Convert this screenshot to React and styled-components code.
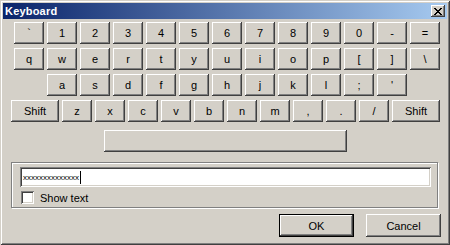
import React, { useState } from 'react'
import styled, { createGlobalStyle } from 'styled-components'

const face = '#d4d0c8'

const Global = createGlobalStyle`
  html, body {
    margin: 0;
    padding: 0;
    background: ${face};
  }
  body {
    font-family: "Liberation Sans", Arial, sans-serif;
    font-size: 11px;
    color: #000;
  }
`

const rows = [
  { indent: 3, keys: ['`', '1', '2', '3', '4', '5', '6', '7', '8', '9', '0', '-', '='] },
  { indent: 3, keys: ['q', 'w', 'e', 'r', 't', 'y', 'u', 'i', 'o', 'p', '[', ']', '\\'] },
  { indent: 36, keys: ['a', 's', 'd', 'f', 'g', 'h', 'j', 'k', 'l', ';', "'"] },
  { indent: 0, keys: ['Shift', 'z', 'x', 'c', 'v', 'b', 'n', 'm', ',', '.', '/', 'Shift'] },
]

const raised = `
  box-shadow:
    inset -1px -1px 0 #404040,
    inset 1px 1px 0 #fff,
    inset -2px -2px 0 #808080;
`

export default function App() {
  const [value] = useState('xxxxxxxxxxxxxx')
  return (
    <>
      <Global />
      <Window>
        <TitleBar>
          <span>Keyboard</span>
          <CloseButton aria-label='Close'>
            <svg width='8' height='7' viewBox='0 0 8 7'>
              <path
                fill='#000'
                d='M0 0h2v1h1v1h2V1h1V0h2v1H7v1H6v1H5v1h1v1h1v1h1v1H6V6H5V5H3v1H2v1H0V6h1V5h1V4h1V3H2V2H1V1H0z'
              />
            </svg>
          </CloseButton>
        </TitleBar>
        <Body>
          {rows.map((row, i) => (
            <KeyRow key={i} $indent={row.indent}>
              {row.keys.map((k, j) => (
                <Key key={j} $w={k === 'Shift' ? 48 : 30}>{k}</Key>
              ))}
            </KeyRow>
          ))}
          <SpaceRow>
            <Key $w={243} aria-label='Space' />
          </SpaceRow>
          <GroupBox>
            <Edit>
              <span>{value}</span>
              <Caret />
            </Edit>
            <CheckRow>
              <CheckBox />
              <span>Show text</span>
            </CheckRow>
          </GroupBox>
          <Actions>
            <DialogButton $default>OK</DialogButton>
            <DialogButton>Cancel</DialogButton>
          </Actions>
        </Body>
      </Window>
    </>
  )
}

const Window = styled.div`
  width: 450px;
  height: 245px;
  box-sizing: border-box;
  padding: 3px;
  background: ${face};
  display: flex;
  flex-direction: column;
  box-shadow:
    inset 1px 1px 0 ${face},
    inset -1px -1px 0 #404040,
    inset 2px 2px 0 #fff,
    inset -2px -2px 0 #808080;
`

const TitleBar = styled.div`
  height: 16px;
  display: flex;
  align-items: center;
  justify-content: space-between;
  padding: 0 2px 0 2px;
  background: linear-gradient(to right, #0a246a, #a6caf0);
  color: #fff;
  font-weight: bold;
  font-size: 11px;
  letter-spacing: 0.2px;
`

const CloseButton = styled.div`
  width: 14px;
  height: 12px;
  background: ${face};
  display: flex;
  align-items: center;
  justify-content: center;
  ${raised}
`

const Body = styled.div`
  display: flex;
  flex-direction: column;
  padding: 3px 0 0 8px;
`

const KeyRow = styled.div`
  display: flex;
  gap: 3px;
  height: 22px;
  margin: 0 0 4px ${p => p.$indent}px;
`

const SpaceRow = styled.div`
  display: flex;
  margin: 4px 0 0 93px;
  height: 22px;
`

const Key = styled.button`
  width: ${p => p.$w}px;
  height: 22px;
  padding: 0 0 1px 0;
  border: 0;
  margin: 0;
  background: ${face};
  font-family: "Liberation Sans", Arial, sans-serif;
  font-size: 11px;
  color: #000;
  display: flex;
  align-items: center;
  justify-content: center;
  ${raised}
`

const GroupBox = styled.div`
  width: 427px;
  height: 46px;
  margin-top: 10px;
  border: 1px solid #808080;
  box-shadow: 1px 1px 0 #fff, inset 1px 1px 0 #fff;
  padding: 4px 0 0 8px;
  box-sizing: border-box;
  display: flex;
  flex-direction: column;
`

const Edit = styled.div`
  width: 411px;
  height: 20px;
  box-sizing: border-box;
  background: #fff;
  display: flex;
  align-items: center;
  padding: 0 0 0 3px;
  font-size: 8px;
  box-shadow:
    inset 1px 1px 0 #808080,
    inset -1px -1px 0 #fff,
    inset 2px 2px 0 #404040,
    inset -2px -2px 0 ${face};
`

const Caret = styled.i`
  width: 1px;
  height: 13px;
  background: #000;
  margin-left: 1px;
`

const CheckRow = styled.div`
  display: flex;
  align-items: center;
  gap: 6px;
  margin: 4px 0 0 1px;
  height: 13px;
`

const CheckBox = styled.div`
  width: 13px;
  height: 13px;
  background: #fff;
  box-shadow:
    inset 1px 1px 0 #808080,
    inset -1px -1px 0 #fff,
    inset 2px 2px 0 #404040,
    inset -2px -2px 0 ${face};
`

const Actions = styled.div`
  display: flex;
  justify-content: flex-end;
  gap: 12px;
  margin: 6px 6px 0 0;
`

const DialogButton = styled.button`
  width: 75px;
  height: 23px;
  border: 0;
  padding: 0;
  background: ${face};
  font-family: "Liberation Sans", Arial, sans-serif;
  font-size: 11px;
  color: #000;
  box-shadow: ${p => p.$default
    ? `inset 0 0 0 1px #000, inset -2px -2px 0 #404040, inset 2px 2px 0 #fff, inset -3px -3px 0 #808080`
    : `inset -1px -1px 0 #404040, inset 1px 1px 0 #fff, inset -2px -2px 0 #808080`};
`
